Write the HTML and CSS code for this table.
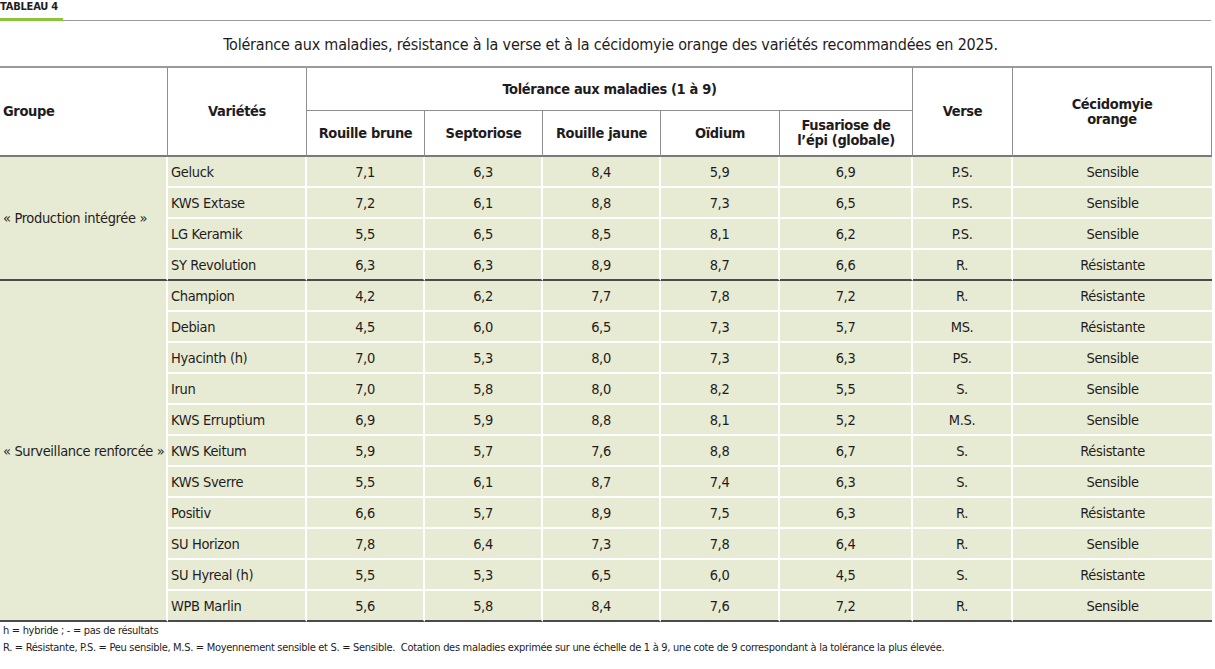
FILE: index.html
```html
<!DOCTYPE html>
<html lang="fr">
<head>
<meta charset="utf-8">
<link rel="stylesheet" href="styles.css">
</head>
<body>
<div class="page">
  <div class="label-bar">
    <div class="label">TABLEAU 4</div>
    <div class="label-rule"></div>
  </div>
  <div class="caption">Tolérance aux maladies, résistance à la verse et à la cécidomyie orange des variétés recommandées en 2025.</div>
  <table class="data">
    <colgroup>
      <col class="c-groupe"><col class="c-var"><col class="c-num"><col class="c-num"><col class="c-num"><col class="c-num2"><col class="c-fus"><col class="c-verse"><col class="c-cec">
    </colgroup>
    <thead>
      <tr class="h1">
        <th rowspan="2" class="left">Groupe</th>
        <th rowspan="2">Variétés</th>
        <th colspan="5">Tolérance aux maladies (1 à 9)</th>
        <th rowspan="2">Verse</th>
        <th rowspan="2">Cécidomyie<br>orange</th>
      </tr>
      <tr class="h2">
        <th>Rouille brune</th>
        <th>Septoriose</th>
        <th>Rouille jaune</th>
        <th>Oïdium</th>
        <th>Fusariose de<br>l’épi (globale)</th>
      </tr>
    </thead>
    <tbody>
      <tr><td rowspan="4" class="grp end">« Production intégrée »</td><td class="var">Geluck</td><td>7,1</td><td>6,3</td><td>8,4</td><td>5,9</td><td>6,9</td><td>P.S.</td><td>Sensible</td></tr>
      <tr><td class="var">KWS Extase</td><td>7,2</td><td>6,1</td><td>8,8</td><td>7,3</td><td>6,5</td><td>P.S.</td><td>Sensible</td></tr>
      <tr><td class="var">LG Keramik</td><td>5,5</td><td>6,5</td><td>8,5</td><td>8,1</td><td>6,2</td><td>P.S.</td><td>Sensible</td></tr>
      <tr class="last"><td class="var">SY Revolution</td><td>6,3</td><td>6,3</td><td>8,9</td><td>8,7</td><td>6,6</td><td>R.</td><td>Résistante</td></tr>
      <tr><td rowspan="11" class="grp end">« Surveillance renforcée »</td><td class="var">Champion</td><td>4,2</td><td>6,2</td><td>7,7</td><td>7,8</td><td>7,2</td><td>R.</td><td>Résistante</td></tr>
      <tr><td class="var">Debian</td><td>4,5</td><td>6,0</td><td>6,5</td><td>7,3</td><td>5,7</td><td>MS.</td><td>Résistante</td></tr>
      <tr><td class="var">Hyacinth (h)</td><td>7,0</td><td>5,3</td><td>8,0</td><td>7,3</td><td>6,3</td><td>PS.</td><td>Sensible</td></tr>
      <tr><td class="var">Irun</td><td>7,0</td><td>5,8</td><td>8,0</td><td>8,2</td><td>5,5</td><td>S.</td><td>Sensible</td></tr>
      <tr><td class="var">KWS Erruptium</td><td>6,9</td><td>5,9</td><td>8,8</td><td>8,1</td><td>5,2</td><td>M.S.</td><td>Sensible</td></tr>
      <tr><td class="var">KWS Keitum</td><td>5,9</td><td>5,7</td><td>7,6</td><td>8,8</td><td>6,7</td><td>S.</td><td>Résistante</td></tr>
      <tr><td class="var">KWS Sverre</td><td>5,5</td><td>6,1</td><td>8,7</td><td>7,4</td><td>6,3</td><td>S.</td><td>Sensible</td></tr>
      <tr><td class="var">Positiv</td><td>6,6</td><td>5,7</td><td>8,9</td><td>7,5</td><td>6,3</td><td>R.</td><td>Résistante</td></tr>
      <tr><td class="var">SU Horizon</td><td>7,8</td><td>6,4</td><td>7,3</td><td>7,8</td><td>6,4</td><td>R.</td><td>Sensible</td></tr>
      <tr><td class="var">SU Hyreal (h)</td><td>5,5</td><td>5,3</td><td>6,5</td><td>6,0</td><td>4,5</td><td>S.</td><td>Résistante</td></tr>
      <tr class="last"><td class="var">WPB Marlin</td><td>5,6</td><td>5,8</td><td>8,4</td><td>7,6</td><td>7,2</td><td>R.</td><td>Sensible</td></tr>
    </tbody>
  </table>
  <div class="notes">
    <p>h = hybride ; - = pas de résultats</p>
    <p>R. = Résistante, P.S. = Peu sensible, M.S. = Moyennement sensible et S. = Sensible.&nbsp; Cotation des maladies exprimée sur une échelle de 1 à 9, une cote de 9 correspondant à la tolérance la plus élevée.</p>
  </div>
</div>
</body>
</html>
```

FILE: styles.css
```css
* { box-sizing: border-box; }
html, body { margin: 0; padding: 0; background: #fff; }
body {
  font-family: "Liberation Sans Narrow", "DejaVu Sans Condensed", "Roboto", sans-serif;
  font-stretch: condensed;
  color: #1f1c1d;
}
.page { width: 1215px; }

.label-bar { display: flex; align-items: flex-end; height: 21px; padding-right: 4px; }
.label {
  width: 63px;
  font-size: 11px;
  font-weight: bold;
  line-height: 14px;
  padding-bottom: 4px;
  border-bottom: 3px solid #8cc43c;
  letter-spacing: -0.2px;
}
.label-rule { flex: 1; border-bottom: 1px solid #9a9a9a; }

.caption {
  text-align: center;
  font-size: 16px;
  letter-spacing: -0.2px;
  line-height: 22px;
  padding-top: 13px;
  height: 45px;
  padding-left: 6px;
}

.data {
  width: 1212px;
  table-layout: fixed;
  border-collapse: separate;
  border-spacing: 0;
  font-size: 14.5px;
  letter-spacing: -0.35px;
}
.c-groupe { width: 168px; }
.c-var { width: 139px; }
.c-num { width: 118px; }
.c-num2 { width: 119px; }
.c-fus { width: 133px; }
.c-verse { width: 100px; }
.c-cec { width: 199px; }

.data th {
  font-weight: bold;
  background: #fff;
  border-right: 1px solid #8e8e8e;
  border-bottom: 1px solid #8e8e8e;
  line-height: 15px;
  padding: 0 2px;
}
.data thead tr.h1 th { border-top: 2px solid #9a9a9a; }
.data tr.h1 { height: 45px; }
.data tr.h2 { height: 46px; }
.data tr.h2 th, .data th[rowspan] { border-bottom: 2px solid #7a7a7a; }
.data th.left { text-align: left; padding-left: 3px; }

.data td {
  background: #e8ebd3;
  text-align: center;
  height: 31px;
  padding: 0 2px;
  border-right: 2px solid #fff;
  border-bottom: 2px solid #fff;
  line-height: 18px;
  white-space: nowrap;
}
.data td:last-child { border-right: none; }
.data td.var { text-align: left; padding-left: 3px; }
.data td.grp { text-align: left; padding-left: 3px; }
.data td.grp.end,
.data tr.last td { border-bottom: 2px solid #4a4a4a; }

.notes { font-size: 11px; letter-spacing: -0.3px; line-height: 17px; padding-left: 3px; padding-top: 0; }
.notes p { margin: 0; }
```
